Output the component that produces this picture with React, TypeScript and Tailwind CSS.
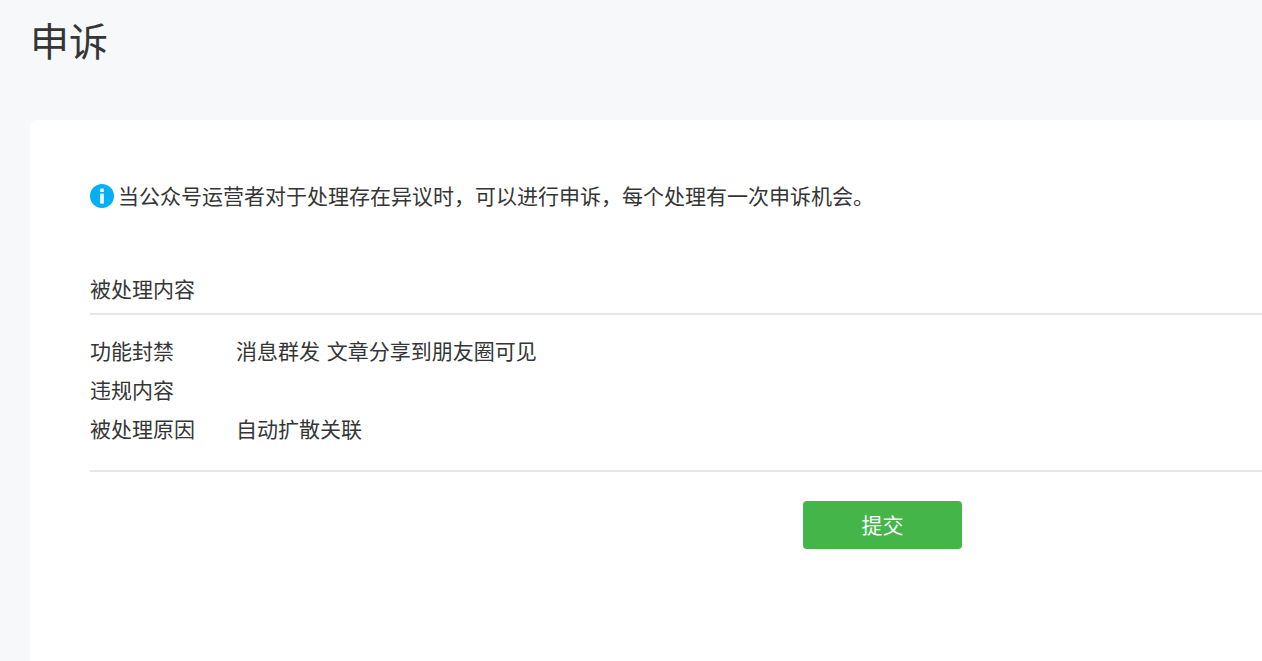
export default function App() {
  return (
    <div className="h-[661px] w-[1262px] overflow-hidden bg-[#f6f8f9] text-[#353535] [font-family:'Noto_Sans_CJK_SC',sans-serif]">
      <h1 className="pl-[30px] pt-[12px] h-[120px] text-[39px] leading-[54px] font-normal">申诉</h1>
      <div className="ml-[30px] h-[541px] rounded-tl-[6px] bg-white pl-[60px] pt-[61px]">
        <div className="flex items-center gap-[4px] h-[30px] text-[21px]">
          <svg width="24" height="24" viewBox="0 0 24 24" className="shrink-0">
            <circle cx="12" cy="12" r="12" fill="#02b0f3" />
            <rect x="10.2" y="4.5" width="3.6" height="3.6" rx="1.2" fill="#fff" />
            <rect x="10.2" y="9.6" width="3.6" height="10" fill="#fff" />
          </svg>
          <span>当公众号运营者对于处理存在异议时，可以进行申诉，每个处理有一次申诉机会。</span>
        </div>
        <div className="mt-[62px] h-[42px] border-b-2 border-[#e7e7eb] text-[21px] leading-[30px]">被处理内容</div>
        <div className="pt-[16px] pb-[22px] border-b-2 border-[#e7e7eb] text-[21px]">
          <div className="flex h-[39px] leading-[39px]"><span className="w-[147px]">功能封禁</span><span className="-ml-px [word-spacing:2px]">消息群发 文章分享到朋友圈可见</span></div>
          <div className="flex h-[39px] leading-[39px]"><span className="w-[147px]">违规内容</span></div>
          <div className="flex h-[39px] leading-[39px]"><span className="w-[147px]">被处理原因</span><span className="-ml-px">自动扩散关联</span></div>
        </div>
        <div className="pt-[29px] pl-[713px]">
          <button className="w-[159px] h-[48px] rounded-[4px] bg-[#44b549] text-white text-[21px]">提交</button>
        </div>
      </div>
    </div>
  );
}
